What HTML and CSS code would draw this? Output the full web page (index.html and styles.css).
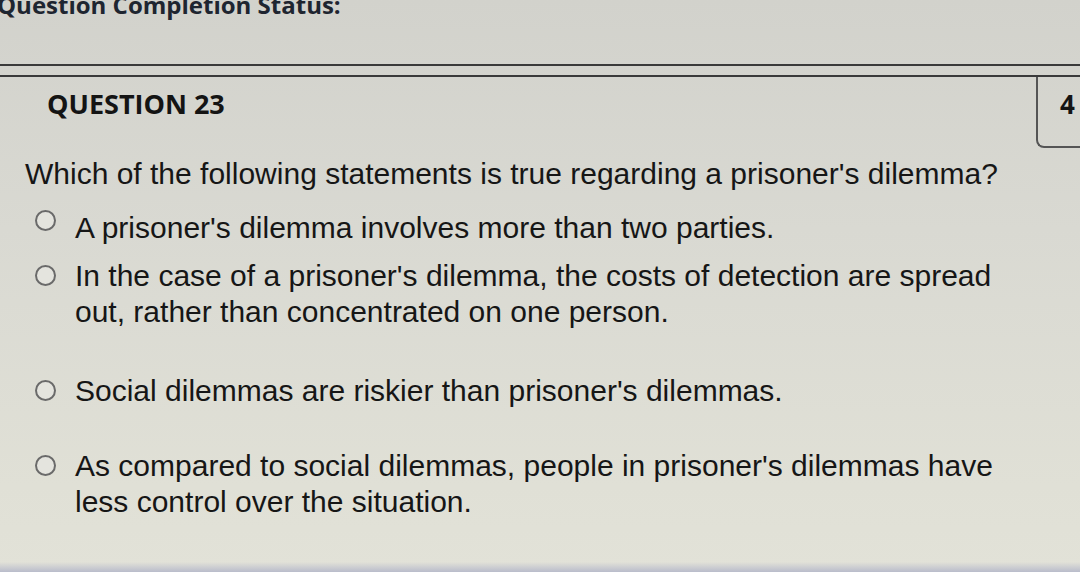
FILE: index.html
```html
<!DOCTYPE html>
<html>
<head>
<meta charset="utf-8">
<link rel="stylesheet" href="styles.css">
</head>
<body>
<div class="page">
  <div class="status">Question Completion Status:</div>
  <div class="rules"></div>
  <div class="qhead">
    <div class="qtitle">QUESTION 23</div>
    <div class="points">4</div>
  </div>
  <div class="question">Which of the following statements is true regarding a prisoner's dilemma?</div>
  <div class="options">
    <div class="opt opt-a"><span class="radio radio-high"></span><span class="label">A prisoner's dilemma involves more than two parties.</span></div>
    <div class="opt opt-b"><span class="radio"></span><span class="label">In the case of a prisoner's dilemma, the costs of detection are spread out, rather than concentrated on one person.</span></div>
    <div class="opt opt-c"><span class="radio"></span><span class="label">Social dilemmas are riskier than prisoner's dilemmas.</span></div>
    <div class="opt opt-d"><span class="radio"></span><span class="label">As compared to social dilemmas, people in prisoner's dilemmas have less control over the situation.</span></div>
  </div>
  <div class="bottom-edge"></div>
</div>
</body>
</html>
```

FILE: styles.css
```css
html, body {
  margin: 0;
  padding: 0;
}
body {
  width: 1080px;
  height: 572px;
  overflow: hidden;
  background: linear-gradient(180deg, #d2d2cc 0%, #d9d9d2 40%, #e0e0d6 85%, #e2e2d8 100%);
  color: #161616;
}
.page {
  position: relative;
  height: 572px;
  display: flex;
  flex-direction: column;
}
.status {
  font-family: "Open Sans", sans-serif;
  font-weight: 700;
  font-size: 24px;
  line-height: 26px;
  margin-top: -8px;
  margin-left: -3px;
  color: #1e2530;
  white-space: nowrap;
}
.rules {
  margin-top: 46px;
  height: 9px;
  border-top: 2px solid #3a3a3a;
  border-bottom: 2px solid #3a3a3a;
}
.qhead {
  display: flex;
  justify-content: space-between;
  align-items: flex-start;
}
.qtitle {
  font-family: "Open Sans", sans-serif;
  font-weight: 700;
  font-size: 27px;
  line-height: 32px;
  margin-top: 11px;
  margin-left: 47px;
  color: #141414;
}
.points {
  width: 44px;
  height: 71px;
  border-left: 2px solid #555;
  border-bottom: 2px solid #555;
  border-bottom-left-radius: 8px;
  font-family: "Open Sans", sans-serif;
  font-weight: 700;
  font-size: 26px;
  line-height: 32px;
  padding: 11px 0 0 17px;
  box-sizing: border-box;
  text-align: center;
  color: #141414;
}
.question {
  font-family: "Liberation Sans", Arial, sans-serif;
  font-size: 30px;
  line-height: 36px;
  margin-top: 8px;
  margin-left: 25px;
  white-space: nowrap;
}
.options {
  margin-top: 18px;
  display: flex;
  flex-direction: column;
}
.opt {
  display: flex;
  align-items: flex-start;
  font-family: "Liberation Sans", Arial, sans-serif;
  font-size: 30px;
  line-height: 36px;
}
.radio {
  flex: none;
  width: 17px;
  height: 17px;
  border: 2px solid #6a6a6a;
  border-radius: 50%;
  margin: 7px 19px 0 35px;
  background: #e4e4de;
}
.radio-high {
  margin-top: 0;
}
.label {
  width: 950px;
}
.opt-a { margin-bottom: 12px; }
.opt-b { margin-bottom: 43px; }
.opt-c { margin-bottom: 39px; }
.bottom-edge {
  margin-top: auto;
  height: 10px;
  background: linear-gradient(180deg, rgba(200,200,215,0) 0%, #b9bccb 100%);
}
```
